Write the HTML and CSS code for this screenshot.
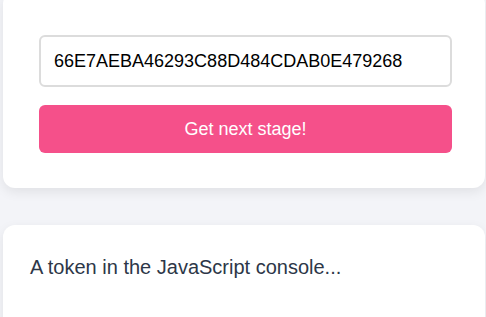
FILE: index.html
```html
<!DOCTYPE html>
<html lang="en">
<head>
    <meta charset="UTF-8">
    <meta name="viewport" content="width=device-width, initial-scale=1.0">
    <title>Next Stage</title>
    <link rel="stylesheet" href="styles.css">
</head>
<body>
    <div class="page">
        <!-- Token form -->
        <div class="card form-card">
            <input class="token-input" type="text" value="66E7AEBA46293C88D484CDAB0E479268">
            <button class="btn">Get next stage!</button>
        </div>

        <!-- Hint -->
        <div class="card hint-card">
            <p class="hint">A token in the JavaScript console...</p>
        </div>
    </div>
</body>
</html>
```

FILE: styles.css
```css
body {
    margin: 0;
    background-color: #f3f4f8;
    font-family: 'Liberation Sans', Arial, sans-serif;
    overflow: hidden;
}

.page {
    margin-top: -8px;
    padding: 0 1px 0 3px;
}

.card {
    background-color: #ffffff;
    border-radius: 12px;
    box-shadow: 0 4px 12px rgba(0, 0, 0, 0.08);
}

.form-card {
    display: flex;
    flex-direction: column;
    gap: 18px;
    padding: 43px 33px 35px 36px;
    margin-bottom: 37px;
}

.token-input {
    height: 52px;
    box-sizing: border-box;
    padding: 0 13px;
    border: 2px solid #dcdcdc;
    border-radius: 6px;
    font-family: inherit;
    font-size: 18px;
    color: #000000;
    background: #ffffff;
}

.btn {
    height: 48px;
    border: none;
    border-radius: 6px;
    background-color: #f5508a;
    color: #ffffff;
    font-family: inherit;
    font-size: 18px;
    cursor: pointer;
}

.hint-card {
    padding: 27px;
    height: 120px;
}

.hint {
    margin: 0;
    font-size: 20px;
    line-height: 1.5;
    color: #2d3748;
}
```
